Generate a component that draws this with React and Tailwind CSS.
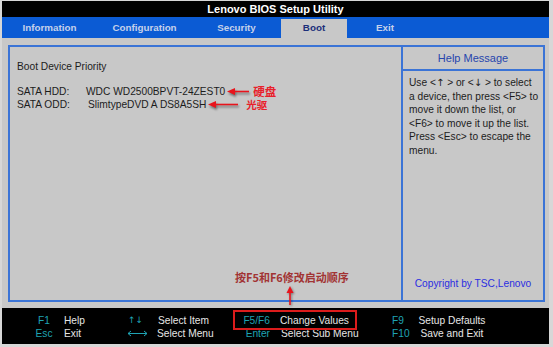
import React from 'react';

const tabs = [
    { label: 'Information', w: 'w-[95px]' },
    { label: 'Configuration', w: 'w-[95px]' },
    { label: 'Security', w: 'w-[89px]' },
    { label: 'Boot', w: 'w-[66px]', active: true },
    { label: 'Exit', w: 'w-[76px]' },
];

const Arrow = ({ children }) => (
    <span className="font-['DejaVu_Sans',sans-serif] text-[10px]">{children}</span>
);

const helpLines = [
    <>Use &lt;<Arrow>↑</Arrow> &gt; or &lt;<Arrow>↓</Arrow> &gt; to select</>,
    'a device, then press <F5> to',
    'move it down the list, or',
    '<F6> to move it up the list.',
    'Press <Esc> to escape the',
    'menu.',
];

const LeftArrow = ({ width }) => (
    <svg width={width} height="9" viewBox={`0 0 ${width} 9`} className="drop-shadow-[1px_2px_1px_rgba(0,0,0,0.45)]">
        <line x1="6" y1="4.5" x2={width - 1} y2="4.5" stroke="#e8141c" strokeWidth="1.6" />
        <polygon points="0,4.5 8,1 8,8" fill="#e8141c" />
    </svg>
);

const LongArrow = () => (
    <svg width="21" height="7" viewBox="0 0 21 7">
        <line x1="1" y1="3.5" x2="20" y2="3.5" stroke="#1fa3b3" strokeWidth="1" />
        <polyline points="4,1 1,3.5 4,6" fill="none" stroke="#1fa3b3" strokeWidth="1" />
        <polyline points="17,1 20,3.5 17,6" fill="none" stroke="#1fa3b3" strokeWidth="1" />
    </svg>
);

const App = () => {
    return (
        <div className="relative w-[553px] h-[347px] bg-[#d7d7d7] pt-px pl-[2px] pr-[4px] pb-[3px] font-['Liberation_Sans',Arial,sans-serif]">
            <div className="flex flex-col h-full">
                <div className="h-[16px] bg-black text-white font-bold text-[11px] flex items-center justify-center">
                    Lenovo BIOS Setup Utility
                </div>

                <div className="h-[21px] bg-[#0b5bd4] flex items-end text-[9.8px] font-bold">
                    {tabs.map((t) => (
                        <div
                            key={t.label}
                            className={`${t.w} h-[19px] flex items-center justify-center ${t.active ? 'bg-[#c8c8c8] text-[#1b2f7a]' : 'text-[#c5d1ea]'}`}
                        >
                            {t.label}
                        </div>
                    ))}
                </div>

                <div className="flex-1 bg-[#c8c8c8] pt-[7px] pb-[6px] pl-[6px] pr-[4px] flex">
                    <div className="flex-1 border-2 border-[#3b74d6] flex text-[10.2px] leading-[13px] text-[#1c1c1c]">
                        <div className="w-[391px] pl-[7px] pt-[13px]">
                            <div>Boot Device Priority</div>
                            <div className="mt-[12px] flex items-center">
                                <span className="w-[69px]">SATA HDD:</span>
                                <span>WDC WD2500BPVT-24ZEST0</span>
                                <span className="ml-[2px] flex"><LeftArrow width={23} /></span>
                                <span className="ml-[3px] text-[11.5px] font-bold text-[#e8202a] font-['Noto_Sans_CJK_SC',sans-serif] leading-[13px]">硬盘</span>
                            </div>
                            <div className="flex items-center">
                                <span className="w-[71px]">SATA ODD:</span>
                                <span>SlimtypeDVD A DS8A5SH</span>
                                <span className="ml-[2px] flex"><LeftArrow width={31} /></span>
                                <span className="ml-[7px] text-[10.5px] font-bold text-[#e8202a] font-['Noto_Sans_CJK_SC',sans-serif] leading-[13px]">光驱</span>
                            </div>
                        </div>

                        <div className="flex-1 border-l-2 border-[#3b74d6] flex flex-col">
                            <div className="h-[24px] border-b-2 border-[#3b74d6] flex items-center justify-center text-[11px] text-[#2645ad]">
                                Help Message
                            </div>
                            <div className="pl-[6px] pt-[5px] leading-[13.5px]">
                                {helpLines.map((l, i) => (
                                    <div key={i} className="whitespace-pre">{l}</div>
                                ))}
                            </div>
                            <div className="mt-auto pb-[10px] text-center text-[#2b2ee0]">Copyright by TSC,Lenovo</div>
                        </div>
                    </div>
                </div>

                <div className="h-[36px] bg-black pl-[28px] pt-[6px] text-[10.2px] leading-[13px] text-[#e6e6e6]">
                    <div className="grid grid-cols-[28px_66px_26px_83px_37px_122px_26px_68px]">
                        <span className="text-center text-[#1fa3b3]">F1</span>
                        <span className="pl-[6px]">Help</span>
                        <span className="text-center text-[#1fa3b3] pr-[3px] font-['DejaVu_Sans',sans-serif] text-[9px]">↑↓</span>
                        <span className="pl-[8px]">Select Item</span>
                        <span className="text-right text-[#1fa3b3]">F5/F6</span>
                        <span className="pl-[10px]">Change Values</span>
                        <span className="text-[#1fa3b3]">F9</span>
                        <span className="text-center whitespace-nowrap">Setup Defaults</span>

                        <span className="text-center text-[#1fa3b3]">Esc</span>
                        <span className="pl-[6px]">Exit</span>
                        <span className="flex items-center justify-center"><LongArrow /></span>
                        <span className="pl-[7px]">Select Menu</span>
                        <span className="text-right text-[#1fa3b3]">Enter</span>
                        <span className="pl-[11px]">Select Sub Menu</span>
                        <span className="text-[#1fa3b3]">F10</span>
                        <span className="text-center whitespace-nowrap">Save and Exit</span>
                    </div>
                </div>
            </div>

            {/* annotations laid over the screenshot */}
            <div className="absolute left-[235px] top-[270px] text-[11px] leading-[14px] font-bold text-[#a23434] font-['Noto_Sans_CJK_SC',sans-serif] whitespace-nowrap">
                按F5和F6修改启动顺序
            </div>
            <svg className="absolute left-[285px] top-[286px] drop-shadow-[1px_1px_1px_rgba(0,0,0,0.4)]" width="10" height="20" viewBox="0 0 10 20">
                <line x1="5" y1="6" x2="5" y2="19" stroke="#e8141c" strokeWidth="1.6" />
                <polygon points="5,0 1.5,7 8.5,7" fill="#e8141c" />
            </svg>
            <div className="absolute left-[233px] top-[310px] w-[124px] h-[20px] border-2 border-[#dc1c1c]" />
        </div>
    );
};

export default App;
